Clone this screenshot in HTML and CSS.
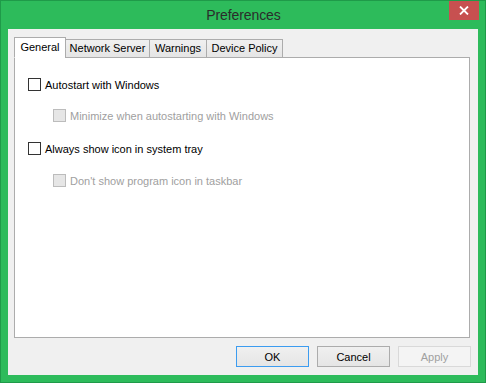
FILE: index.html
```html
<!DOCTYPE html>
<html lang="en">
<head>
  <meta charset="UTF-8">
  <title>Preferences</title>
  <link rel="stylesheet" href="styles.css">
</head>
<body>
  <div class="window">
    <div class="title-bar">
      <span></span>
      <span class="title">Preferences</span>
      <button class="close-btn" aria-label="Close">
        <svg width="10" height="9" viewBox="0 0 10 9">
          <path d="M1 0.5 L9 8.5 M9 0.5 L1 8.5" stroke="#fff" stroke-width="1.8"/>
        </svg>
      </button>
    </div>

    <div class="client">
      <div class="tabs">
        <div class="tab active" style="width: 52px">General</div>
        <div class="tab" style="width: 85px">Network Server</div>
        <div class="tab" style="width: 58px">Warnings</div>
        <div class="tab" style="width: 77px">Device Policy</div>
      </div>

      <div class="tab-panel">
        <label class="option">
          <span class="check"></span>Autostart with Windows
        </label>
        <label class="option sub disabled">
          <span class="check"></span>Minimize when autostarting with Windows
        </label>
        <label class="option">
          <span class="check"></span>Always show icon in system tray
        </label>
        <label class="option sub disabled">
          <span class="check"></span>Don't show program icon in taskbar
        </label>
      </div>

      <div class="button-row">
        <button class="btn default">OK</button>
        <button class="btn">Cancel</button>
        <button class="btn" disabled>Apply</button>
      </div>
    </div>
  </div>
</body>
</html>
```

FILE: styles.css
```css
* {
  box-sizing: border-box;
}

body {
  margin: 0;
  font-family: "Liberation Sans", Arial, sans-serif;
  font-size: 11px;
  color: #000;
}

.window {
  width: 486px;
  height: 383px;
  border: 1px solid #1f9a49;
  background-color: #2dbb5b;
  padding: 0 7px 7px 7px;
  display: flex;
  flex-direction: column;
}

.title-bar {
  height: 28px;
  display: grid;
  grid-template-columns: 1fr auto 1fr;
  align-items: start;
  margin-right: -1px;
}

.title {
  font-size: 14px;
  color: #2b2b2b;
  line-height: 29px;
  letter-spacing: -0.1px;
}

.close-btn {
  justify-self: end;
  width: 30px;
  height: 19px;
  border: none;
  padding: 0;
  background-color: #c75050;
  display: flex;
  align-items: center;
  justify-content: center;
}

.client {
  flex: 1;
  background-color: #f0f0f0;
  padding: 8px 8px 0 6px;
  display: flex;
  flex-direction: column;
}

.tabs {
  display: flex;
  align-items: flex-end;
  height: 21px;
  position: relative;
  z-index: 1;
  margin-bottom: -1px;
}

.tab {
  height: 19px;
  line-height: 17px;
  text-align: center;
  border: 1px solid #acacac;
  background: linear-gradient(#f0f0f0, #e5e5e5);
  white-space: nowrap;
}

.tab + .tab {
  margin-left: -1px;
}

.tab.active {
  height: 21px;
  line-height: 18px;
  background: #fff;
  border-bottom-color: #fff;
}

.tab-panel {
  height: 281px;
  background-color: #fff;
  border: 1px solid #acacac;
  padding: 20px 0 0 13px;
  display: flex;
  flex-direction: column;
}

.option {
  display: flex;
  align-items: center;
  gap: 4px;
  height: 13px;
  white-space: nowrap;
}

.option + .option {
  margin-top: 18px;
}

.option + .option + .option {
  margin-top: 20px;
}

.option + .option + .option + .option {
  margin-top: 19px;
}

.option.sub {
  margin-left: 25px;
}

.check {
  width: 13px;
  height: 13px;
  border: 1px solid #333;
  background-color: #fff;
  flex: none;
}

.option.disabled {
  color: #a0a0a0;
}

.option.disabled .check {
  border-color: #bcbcbc;
  background-color: #e6e6e6;
}

.button-row {
  display: flex;
  justify-content: flex-end;
  gap: 8px;
  margin-top: 8px;
  margin-right: -1px;
}

.btn {
  width: 73px;
  height: 21px;
  padding: 0;
  border: 1px solid #acacac;
  background: linear-gradient(#f0f0f0, #e5e5e5);
  font-family: "Liberation Sans", Arial, sans-serif;
  font-size: 11px;
  color: #000;
}

.btn.default {
  border-color: #3c9cf0;
}

.btn:disabled {
  border-color: #d9d9d9;
  background: #f4f4f4;
  color: #a0a0a0;
}
```
